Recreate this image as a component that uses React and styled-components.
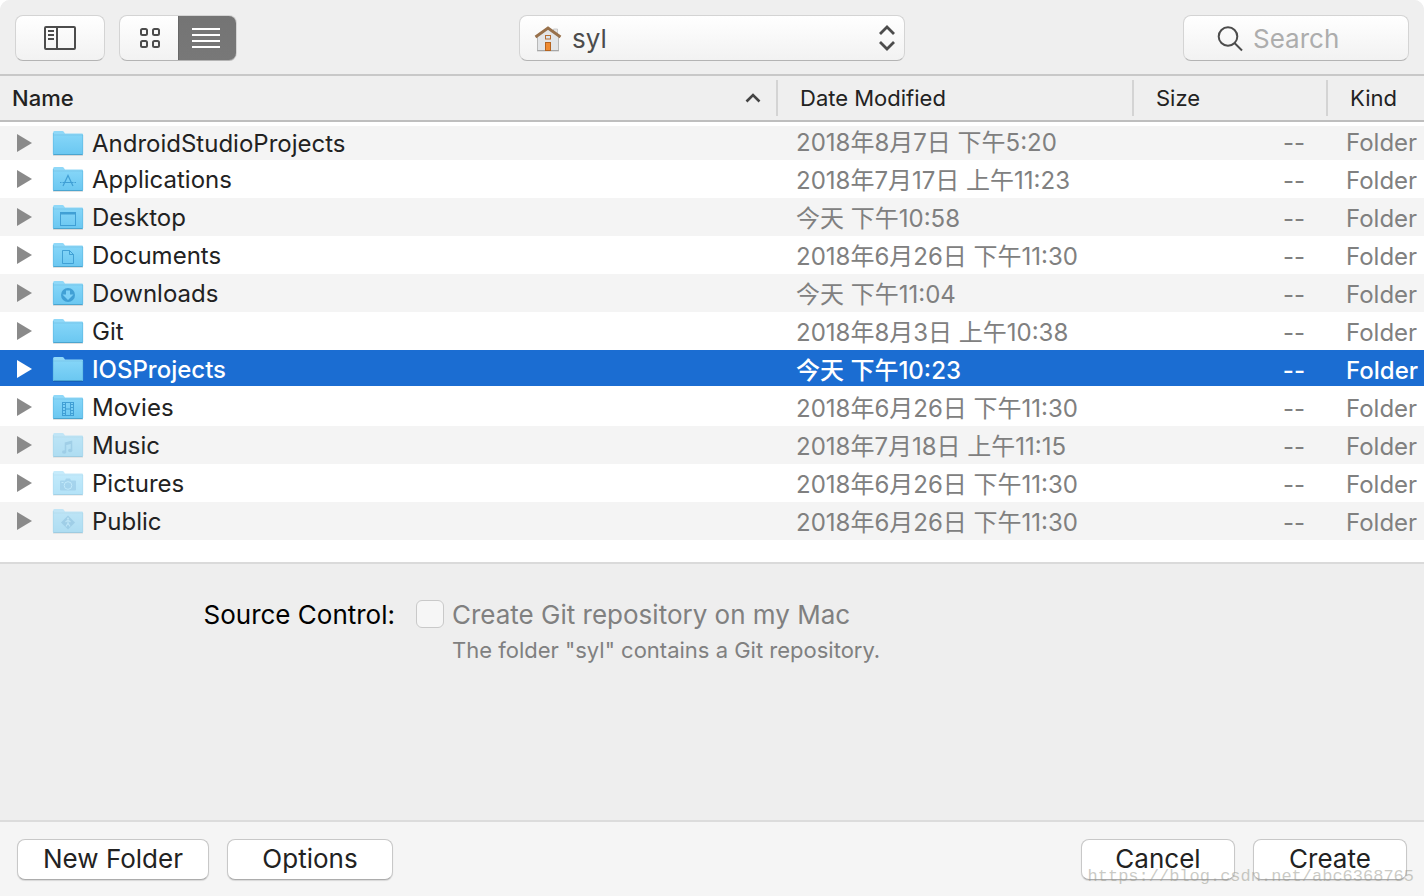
import React from 'react';
import styled, { createGlobalStyle, css } from 'styled-components';

const GlobalStyle = createGlobalStyle`
  * { box-sizing: border-box; }
  body {
    margin: 0;
    background: #fff;
    color: #222;
    font-family: Inter, "Noto Sans CJK SC", sans-serif;
    font-size: 24px;
  }
  button, input, select { font-family: inherit; }
`;

const Dialog = styled.main`
  position: relative;
  display: flex;
  flex-direction: column;
  min-height: 100vh;
  background: #eee;
  border-radius: 10px 10px 0 0;
  overflow: hidden;
`;

const Toolbar = styled.header`
  display: grid;
  grid-template-columns: 1fr auto 1fr;
  align-items: center;
  padding: 15px 15px 13px;
  background: #efefef;
`;

const ToolGroup = styled.div`
  display: flex;
  gap: 14px;
`;

const raised = css`
  height: 46px;
  border: 1px solid #d4d4d4;
  border-bottom-color: #b4b4b4;
  border-radius: 8px;
  background: linear-gradient(#fff, #f2f2f2);
`;

const ToolButton = styled.button`
  ${raised}
  display: flex;
  align-items: center;
  justify-content: center;
  width: 90px;
  padding: 0;
`;

const Segmented = styled.div`
  ${raised}
  display: flex;
  width: 118px;
  overflow: hidden;
  ${ToolButton} {
    flex: 1;
    height: 46px;
    margin: -1px 0;
    border: 0;
    border-radius: 0;
    background: transparent;
    padding-left: 2px;
  }
  ${ToolButton}[aria-pressed='true'] {
    margin-right: -1px;
    padding: 0 2px 0 0;
    background: linear-gradient(#747474, #787878);
    border: 1px solid #686868;
    border-radius: 0 8px 8px 0;
  }
`;

const Popup = styled.div`
  position: relative;
  width: 386px;
`;

const PopupSelect = styled.select`
  ${raised}
  appearance: none;
  display: block;
  width: 100%;
  padding: 0 48px 0 52px;
  color: #4c4c4c;
  font-size: 26px;
`;

const PopupIcon = styled.span`
  position: absolute;
  top: 0;
  bottom: 0;
  left: ${(p) => (p.$end ? 'auto' : '15px')};
  right: ${(p) => (p.$end ? '10px' : 'auto')};
  display: flex;
  align-items: center;
  pointer-events: none;
`;

const SearchField = styled.label`
  ${raised}
  display: flex;
  align-items: center;
  gap: 9px;
  justify-self: end;
  width: 226px;
  padding: 0 16px 0 33px;
  svg { flex: none; }
`;

const SearchInput = styled.input`
  flex: 1;
  min-width: 0;
  padding: 0;
  border: 0;
  outline: 0;
  background: transparent;
  color: #4c4c4c;
  font-size: 26px;
  &::placeholder { color: #adadad; opacity: 1; }
`;

const FileTable = styled.table`
  width: 100%;
  table-layout: fixed;
  border-collapse: separate;
  border-spacing: 0;
  background: #fff;
  tbody::before {
    content: '';
    display: block;
    height: 4px;
  }
`;

const Column = styled.col`
  width: ${(p) => p.$width || 'auto'};
`;

const HeadCell = styled.th`
  height: 48px;
  padding: 0;
  background: #efefef;
  border-top: 2px solid #c8c8c8;
  border-bottom: 2px solid #bebebe;
  font-size: 22px;
  font-weight: ${(p) => (p.$sorted ? 500 : 400)};
  text-align: left;
`;

const HeadLabel = styled.div`
  display: flex;
  align-items: center;
  justify-content: space-between;
  height: 36px;
  padding: 0 15px 0 ${(p) => (p.$divided ? '22px' : '12px')};
  border-left: ${(p) => (p.$divided ? '2px solid #d4d4d4' : '0')};
`;

const Row = styled.tr`
  height: 38px;
  color: #222;
  background: #fff;
  &:nth-child(odd) { background: #f4f4f4; }
  &:first-child { height: 34px; }
  &[aria-selected='true'] {
    background: linear-gradient(#1b6dd2 36px, #fff 36px);
    color: #fff;
    font-weight: 500;
  }
`;

const Cell = styled.td`
  padding: 0 0 0 20px;
  color: ${(p) => (p.$selected ? '#fff' : '#808080')};
  line-height: 34px;
  white-space: nowrap;
  text-align: ${(p) => (p.$right ? 'right' : 'left')};
  padding-right: ${(p) => (p.$right ? '21px' : '0')};
  vertical-align: bottom;
`;

const NameCell = styled.td`
  padding: 0;
`;

const NameContent = styled.div`
  display: flex;
  align-items: center;
  height: 32px;
  padding-left: 16px;
  white-space: nowrap;
`;

const Disclosure = styled.button`
  display: flex;
  width: 36px;
  padding: 0;
  border: 0;
  background: transparent;
  color: ${(p) => (p.$selected ? '#fff' : '#8a8a8a')};
`;

const FolderSvg = styled.svg`
  margin-right: 8px;
  opacity: ${(p) => (p.$faded ? 0.5 : 1)};
`;

const Options = styled.section`
  flex: 1;
  display: grid;
  grid-template-columns: 395px 1fr;
  column-gap: 21px;
  align-content: start;
  margin-top: 22px;
  padding-top: 33px;
  border-top: 2px solid #dadada;
  background: #eee;
`;

const Accessory = styled.div`
  display: flex;
  flex: 1;
  background: linear-gradient(#fff 22px, #eee 22px);
`;

const OptionTitle = styled.div`
  color: #000;
  font-size: 26px;
  line-height: 36px;
  text-align: right;
  white-space: nowrap;
`;

const OptionBody = styled.div`
  display: flex;
  flex-direction: column;
  color: #808080;
`;

const CheckLabel = styled.label`
  display: flex;
  align-items: center;
  gap: 8px;
  font-size: 26px;
  line-height: 36px;
`;

const Checkbox = styled.input`
  appearance: none;
  width: 28px;
  height: 28px;
  margin: 0 0 2px;
  border: 1px solid #c9c9c9;
  border-radius: 6px;
  background: #f6f6f6;
`;

const Hint = styled.p`
  margin: 0;
  padding-left: 36px;
  font-size: 22px;
  line-height: 34px;
`;

const Footer = styled.footer`
  display: flex;
  justify-content: space-between;
  padding: 17px 17px 16px;
  border-top: 2px solid #dcdcdc;
  background: #f5f5f5;
`;

const Actions = styled.div`
  display: flex;
  gap: 18px;
`;

const PushButton = styled.button`
  width: ${(p) => p.$width};
  height: 41px;
  padding: 0 0 2px;
  border: 1px solid #c8c8c8;
  border-bottom-color: #acacac;
  border-radius: 8px;
  background: #fff;
  box-shadow: 0 1px 1px rgba(0, 0, 0, 0.12);
  color: #222;
  font-size: 26px;
  line-height: 36px;
`;

const Watermark = styled.span`
  position: absolute;
  right: 10px;
  bottom: 9px;
  color: rgba(150, 150, 140, 0.5);
  font: 17px/20px "Liberation Mono", monospace;
  pointer-events: none;
`;

const glyphs = {
  apps: (
    <g>
      <path d="M10 19 15 8.500l5 10.500M11 15.500h8" strokeWidth="1.200" />
      <path d="M7 15.500h4M19 15.500h4" strokeDasharray="1.500 1" />
    </g>
  ),
  desktop: (
    <g>
      <rect x="7.500" y="7.500" width="15" height="13" />
      <path d="M8 8.500h14" strokeWidth="2" />
    </g>
  ),
  document: <path d="M9.500 7.500h7l4 4v9h-11zM16.500 7.500v4h4" />,
  download: (
    <g>
      <circle cx="15" cy="14" r="7" fill="#3b9bd2" stroke="none" />
      <path d="M13 9.500h4v4h3.500L15 19l-5.500-5.500h3.500z" fill="#7fd2f8" stroke="none" />
    </g>
  ),
  movie: (
    <g>
      <rect x="9.500" y="7.500" width="11" height="13" />
      <path d="M12.500 7.500v13M17.500 7.500v13M12.500 14h5" />
      <path d="M11 9v11M19 9v11" strokeDasharray="1 2" strokeWidth="2" />
    </g>
  ),
  music: (
    <g>
      <path d="M12.500 18.500V10l6-1.500v8.500M12.500 11.500l6-1.500" strokeWidth="1.500" />
      <ellipse cx="11.200" cy="19" rx="2.200" ry="1.800" fill="#3b9bd2" stroke="none" />
      <ellipse cx="17.200" cy="17.500" rx="2.200" ry="1.800" fill="#3b9bd2" stroke="none" />
    </g>
  ),
  camera: (
    <g>
      <path d="M8 9.500h4l1-2h4l1 2h4q1 0 1 1v8q0 1-1 1H8q-1 0-1-1v-8q0-1 1-1z" fill="#3b9bd2" stroke="none" />
      <circle cx="15" cy="14.500" r="3.800" stroke="#8dd8f9" />
      <path d="M8.500 11.500h2" stroke="#8dd8f9" />
    </g>
  ),
  publicSign: (
    <g>
      <path d="M15 6.500 22 13.500 15 20.500 8 13.500z" fill="#3b9bd2" stroke="none" />
      <circle cx="15" cy="9.500" r="1" fill="#8dd8f9" stroke="none" />
      <path d="M15 11v3l2 3.500M15 14l-2 3.500M12.500 13l2.500-2 2.500 2" stroke="#8dd8f9" strokeWidth="1.200" />
    </g>
  ),
};

function Folder({ glyph, faded }) {
  return (
    <FolderSvg $faded={faded} width="32" height="26" viewBox="0 0 32 26" aria-hidden="true">
      <defs>
        <linearGradient id="folderFront" x1="0" y1="0" x2="0" y2="1">
          <stop offset="0" stopColor="#84d5f8" />
          <stop offset="1" stopColor="#6ac7f1" />
        </linearGradient>
      </defs>
      <path d="M1 25.300h30" stroke="#000" strokeOpacity=".15" />
      <g transform="translate(1 1)">
        <path d="M0 2Q0 0 1.500 0h8q.8 0 1.300.7L12 2.500h17q1 0 1 1V23q0 1-1 1H1q-1 0-1-1z" fill="#8fd8f8" />
        <path d="M0 4.500h30V23q0 1-1 1H1q-1 0-1-1z" fill="url(#folderFront)" />
        <path d="M0 4h30" stroke="#6bc0e6" strokeWidth=".7" />
        <path d="M.5 23.500h29" stroke="#4ba5cf" />
        <path d="M.3 2v21M29.700 4v19" stroke="#5cb7e0" strokeWidth=".6" />
        <g fill="none" stroke="#3b9bd2" strokeWidth="1" opacity={faded ? 0.7 : 0.9}>{glyphs[glyph]}</g>
      </g>
    </FolderSvg>
  );
}

const files = [
  { name: 'AndroidStudioProjects', date: '2018年8月7日 下午5:20' },
  { name: 'Applications', date: '2018年7月17日 上午11:23', glyph: 'apps' },
  { name: 'Desktop', date: '今天 下午10:58', glyph: 'desktop' },
  { name: 'Documents', date: '2018年6月26日 下午11:30', glyph: 'document' },
  { name: 'Downloads', date: '今天 下午11:04', glyph: 'download' },
  { name: 'Git', date: '2018年8月3日 上午10:38' },
  { name: 'IOSProjects', date: '今天 下午10:23', selected: true },
  { name: 'Movies', date: '2018年6月26日 下午11:30', glyph: 'movie' },
  { name: 'Music', date: '2018年7月18日 上午11:15', glyph: 'music', faded: true },
  { name: 'Pictures', date: '2018年6月26日 下午11:30', glyph: 'camera', faded: true },
  { name: 'Public', date: '2018年6月26日 下午11:30', glyph: 'publicSign', faded: true },
];

function FileRow({ file }) {
  const { name, date, glyph, faded, selected } = file;
  return (
    <Row aria-selected={!!selected}>
      <NameCell>
        <NameContent>
          <Disclosure $selected={selected} aria-label={`Expand ${name}`}>
            <svg width="16" height="18" viewBox="0 0 16 18">
              <path d="M1 0 16 9 1 18z" fill="currentColor" />
            </svg>
          </Disclosure>
          <Folder glyph={glyph} faded={faded} />
          {name}
        </NameContent>
      </NameCell>
      <Cell $selected={selected}>{date}</Cell>
      <Cell $selected={selected} $right>--</Cell>
      <Cell $selected={selected}>Folder</Cell>
    </Row>
  );
}

export default function App() {
  return (
    <>
      <GlobalStyle />
      <Dialog>
        <Toolbar>
          <ToolGroup>
            <ToolButton aria-label="Toggle sidebar">
              <svg width="32" height="24" viewBox="0 0 32 24" fill="none" stroke="#4c4c4c" strokeWidth="2">
                <rect x="1" y="1" width="30" height="22" rx="1" />
                <path d="M13 1v22M4 5h6M4 9h6M4 13h6" />
              </svg>
            </ToolButton>
            <Segmented>
              <ToolButton aria-label="Icon view" aria-pressed="false">
                <svg width="20" height="20" viewBox="0 0 20 20" fill="none" stroke="#4c4c4c" strokeWidth="2">
                  <rect x="1" y="1" width="6" height="6" rx="1.500" />
                  <rect x="13" y="1" width="6" height="6" rx="1.500" />
                  <rect x="1" y="13" width="6" height="6" rx="1.500" />
                  <rect x="13" y="13" width="6" height="6" rx="1.500" />
                </svg>
              </ToolButton>
              <ToolButton aria-label="List view" aria-pressed="true">
                <svg width="28" height="20" viewBox="0 0 28 20" stroke="#fff" strokeWidth="2">
                  <path d="M0 1h28M0 7h28M0 13h28M0 19h28" />
                </svg>
              </ToolButton>
            </Segmented>
          </ToolGroup>
          <Popup>
            <PopupSelect aria-label="Location" defaultValue="syl">
              <option value="syl">syl</option>
            </PopupSelect>
            <PopupIcon>
              <svg width="28" height="28" viewBox="0 0 28 28">
                <path d="M19.500 5h4v6l-4-3z" fill="#e4e4e4" stroke="#bcbcbc" strokeWidth=".7" />
                <path d="M3.500 12 14 4.500 24.500 12v14.500h-21z" fill="#e3e5e7" stroke="#aaa" strokeWidth=".8" />
                <path d="M3 26.800h22" stroke="#999" strokeWidth=".8" />
                <path d="M1.500 13 14 4 26.500 13" fill="none" stroke="#98704a" strokeWidth="2.800" />
                <rect x="11.500" y="11.500" width="5" height="3.500" fill="#dce6ee" stroke="#b76c30" />
                <rect x="11.500" y="18.500" width="5" height="8" fill="#ef8b32" stroke="#b56420" />
              </svg>
            </PopupIcon>
            <PopupIcon $end>
              <svg width="16" height="26" viewBox="0 0 16 26" fill="none" stroke="#4c4c4c" strokeWidth="2.800">
                <path d="m1 9 7-7 7 7M1 17l7 7 7-7" />
              </svg>
            </PopupIcon>
          </Popup>
          <SearchField>
            <svg width="27" height="27" viewBox="0 0 27 27" fill="none" stroke="#4c4c4c" strokeWidth="2">
              <circle cx="11" cy="11.500" r="9.300" />
              <path d="m17.500 18 7.500 7.500" />
            </svg>
            <SearchInput type="text" aria-label="Search" placeholder="Search" />
          </SearchField>
        </Toolbar>

        <FileTable>
          <colgroup>
            <Column />
            <Column $width="356px" />
            <Column $width="194px" />
            <Column $width="98px" />
          </colgroup>
          <thead>
            <tr>
              <HeadCell $sorted aria-sort="ascending">
                <HeadLabel>
                  Name
                  <svg width="16" height="10" viewBox="0 0 16 10" fill="none" stroke="#444" strokeWidth="2.600">
                    <path d="m1.500 8.500 6.500-6.500 6.500 6.500" />
                  </svg>
                </HeadLabel>
              </HeadCell>
              <HeadCell><HeadLabel $divided>Date Modified</HeadLabel></HeadCell>
              <HeadCell><HeadLabel $divided>Size</HeadLabel></HeadCell>
              <HeadCell><HeadLabel $divided>Kind</HeadLabel></HeadCell>
            </tr>
          </thead>
          <tbody>
            {files.map((file) => <FileRow key={file.name} file={file} />)}
          </tbody>
        </FileTable>

        <Accessory>
          <Options>
            <OptionTitle id="source-control">Source Control:</OptionTitle>
            <OptionBody role="group" aria-labelledby="source-control">
              <CheckLabel>
                <Checkbox type="checkbox" disabled />
                Create Git repository on my Mac
              </CheckLabel>
              <Hint>The folder "syl" contains a Git repository.</Hint>
            </OptionBody>
          </Options>
        </Accessory>

        <Footer>
          <Actions>
            <PushButton $width="192px">New Folder</PushButton>
            <PushButton $width="166px">Options</PushButton>
          </Actions>
          <Actions>
            <PushButton $width="154px">Cancel</PushButton>
            <PushButton $width="154px">Create</PushButton>
          </Actions>
        </Footer>
        <Watermark>https://blog.csdn.net/abc6368765</Watermark>
      </Dialog>
    </>
  );
}
